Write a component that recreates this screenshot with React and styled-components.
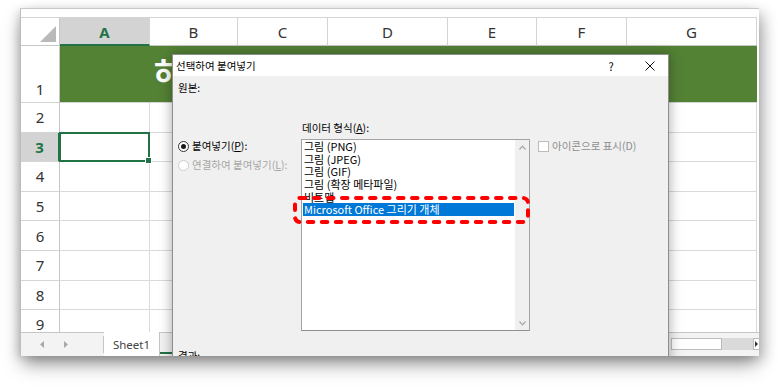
import React from 'react';
import styled, { createGlobalStyle } from 'styled-components';

const GlobalStyle = createGlobalStyle`
  html, body { margin: 0; padding: 0; background: #ffffff; }
  body { font-family: "Noto Sans", "Noto Sans CJK KR", sans-serif; }
`;

const GREEN = '#217346';

const Page = styled.div`
  width: 778px;
  height: 390px;
  box-sizing: border-box;
  padding: 8px 0 0 20px;
  overflow: hidden;
  background: #ffffff;
`;

const Window = styled.div`
  position: relative;
  width: 739px;
  height: 348px;
  box-sizing: border-box;
  border-top: 1px solid #c8c8c8;
  border-left: 1px solid #bdbdbd;
  background: #ffffff;
  overflow: hidden;
  display: flex;
  flex-direction: column;
  box-shadow: 0 10px 18px -2px rgba(0, 0, 0, 0.38), 6px 4px 12px rgba(0, 0, 0, 0.14),
    -3px 2px 8px rgba(0, 0, 0, 0.1);
`;

const TopStrip = styled.div`
  height: 8px;
  flex: none;
  background: #ffffff;
`;

const Sheet = styled.div`
  height: 315px;
  flex: none;
  overflow: hidden;
  display: grid;
  grid-template-columns: 39px 90px 88px 90px 120px 89px 90px 130px;
  grid-template-rows: 29px 57px repeat(8, 29.6px);
  font-family: "Noto Sans", "Open Sans", sans-serif;
`;

const Corner = styled.div`
  position: relative;
  box-sizing: border-box;
  border-top: 1px solid #d4d4d4;
  border-right: 1px solid #c6c6c6;
  border-bottom: 1px solid #c6c6c6;
  background: #ffffff;
  &::after {
    content: '';
    position: absolute;
    right: 3px;
    bottom: 3px;
    width: 0;
    height: 0;
    border-left: 16px solid transparent;
    border-bottom: 16px solid #b9b9b9;
  }
`;

const ColHead = styled.div`
  box-sizing: border-box;
  display: flex;
  align-items: center;
  justify-content: center;
  border-top: 1px solid #d4d4d4;
  border-right: 1px solid #d4d4d4;
  border-bottom: ${(p) => (p.$active ? `2px solid ${GREEN}` : '1px solid #c6c6c6')};
  background: ${(p) => (p.$active ? '#d3d3d3' : '#ffffff')};
  color: ${(p) => (p.$active ? GREEN : '#333333')};
  font-weight: ${(p) => (p.$active ? 700 : 400)};
  font-size: 15px;
  padding-top: 1px;
`;

const RowHead = styled.div`
  box-sizing: border-box;
  display: flex;
  justify-content: center;
  align-items: ${(p) => (p.$bottom ? 'flex-end' : 'center')};
  padding-bottom: ${(p) => (p.$bottom ? '3px' : '0')};
  border-right: ${(p) => (p.$active ? `2px solid ${GREEN}` : '1px solid #c6c6c6')};
  border-bottom: 1px solid #d4d4d4;
  background: ${(p) => (p.$active ? '#d3d3d3' : '#ffffff')};
  color: ${(p) => (p.$active ? GREEN : '#333333')};
  font-weight: ${(p) => (p.$active ? 700 : 400)};
  font-size: 15px;
`;

const Banner = styled.div`
  grid-column: span 7;
  box-sizing: border-box;
  background: #548235;
  border-bottom: 1px solid #d4d4d4;
  display: flex;
  align-items: center;
  padding: 0 0 6px 94px;
  color: #ffffff;
  font-family: "Noto Sans CJK KR", sans-serif;
  font-weight: 700;
  font-size: 31px;
  white-space: nowrap;
  overflow: hidden;
`;

const Cell = styled.div`
  position: relative;
  box-sizing: border-box;
  border-right: 1px solid #dadada;
  border-bottom: 1px solid #dadada;
  background: #ffffff;
  ${(p) =>
    p.$selected &&
    `
    z-index: 1;
    &::before {
      content: '';
      position: absolute;
      left: -1px; top: -1px; right: -1px; bottom: -1px;
      border: 2px solid ${GREEN};
    }
    &::after {
      content: '';
      position: absolute;
      right: -3px; bottom: -3px;
      width: 5px; height: 5px;
      background: ${GREEN};
      border: 1px solid #ffffff;
    }
  `}
`;

const TabBar = styled.div`
  height: 24px;
  flex: none;
  box-sizing: border-box;
  border-top: 1px solid #c6c6c6;
  background: #f3f3f3;
  display: flex;
  align-items: stretch;
  font-family: "Noto Sans", sans-serif;
`;

const NavArrows = styled.div`
  width: 83px;
  display: flex;
  align-items: center;
  padding-left: 19px;
  gap: 20px;
  box-sizing: border-box;
  border-right: 1px solid #c6c6c6;
  margin: 3px 0;
`;

const SheetTab = styled.div`
  width: 56px;
  box-sizing: border-box;
  background: #ffffff;
  border-right: 1px solid #c6c6c6;
  display: flex;
  align-items: center;
  justify-content: center;
  font-size: 11.5px;
  color: #444444;
  margin-top: -1px;
`;

const NewSheet = styled.div`
  width: 12px;
  border-bottom: 2px solid ${GREEN};
  margin-bottom: 2px;
`;

const HScroll = styled.div`
  margin-left: auto;
  display: flex;
  align-items: flex-start;
  padding-top: 5px;
`;

const Thumb = styled.div`
  width: 51px;
  height: 12px;
  box-sizing: border-box;
  background: #ffffff;
  border: 1px solid #bcbcbc;
`;

const Track = styled.div`
  width: 31px;
  height: 12px;
  background: #dadada;
`;

const ScrollEnd = styled.div`
  width: 6px;
  height: 12px;
  box-sizing: border-box;
  border: 1px solid #bcbcbc;
  border-right: none;
  background: #ffffff;
  display: flex;
  align-items: center;
  padding-left: 1px;
`;

const Dialog = styled.div`
  position: absolute;
  left: 151px;
  top: 45px;
  width: 497px;
  height: 330px;
  box-sizing: border-box;
  border: 1px solid #8e8e8e;
  background: #f0f0f0;
  box-shadow: 0 0 12px rgba(0, 0, 0, 0.35);
  display: flex;
  flex-direction: column;
  font-family: "Noto Sans CJK KR", "Noto Sans", sans-serif;
  font-size: 10.5px;
  color: #000000;
  z-index: 5;
`;

const TitleBar = styled.div`
  height: 21px;
  flex: none;
  background: #ffffff;
  display: flex;
  align-items: center;
  padding-left: 3px;
  font-size: 10.5px;
`;

const Title = styled.span`
  flex: 1;
`;

const TitleButton = styled.div`
  width: 30px;
  height: 21px;
  display: flex;
  align-items: center;
  justify-content: center;
  margin-right: ${(p) => p.$mr || 0}px;
  font-size: 11px;
`;

const Body = styled.div`
  padding: 5px 0 0 5px;
  display: flex;
  flex-direction: column;
`;

const Label = styled.div`
  line-height: 14px;
  height: 14px;
  white-space: nowrap;
  color: ${(p) => (p.$disabled ? '#a0a0a0' : '#000000')};
`;

const Main = styled.div`
  margin-top: 26px;
  display: grid;
  grid-template-columns: 123px 229px 1fr;
  grid-template-rows: 14px auto;
  row-gap: 4px;
`;

const Options = styled.div`
  grid-column: 1;
  grid-row: 2;
  display: flex;
  flex-direction: column;
  gap: 5px;
`;

const Option = styled.div`
  display: flex;
  align-items: center;
  gap: 3px;
  height: 14px;
  line-height: 14px;
  white-space: nowrap;
  color: ${(p) => (p.$disabled ? '#a6a6a6' : '#000000')};
`;

const Radio = styled.span`
  width: 11px;
  height: 11px;
  flex: none;
  box-sizing: border-box;
  border-radius: 50%;
  border: 1px solid ${(p) => (p.$disabled ? '#cccccc' : '#333333')};
  background: #ffffff;
  display: flex;
  align-items: center;
  justify-content: center;
  &::after {
    content: '';
    display: ${(p) => (p.$checked ? 'block' : 'none')};
    width: 5px;
    height: 5px;
    border-radius: 50%;
    background: #1a1a1a;
  }
`;

const Checkbox = styled.span`
  width: 11px;
  height: 11px;
  flex: none;
  box-sizing: border-box;
  border: 1px solid #bcbcbc;
  background: #ffffff;
`;

const FormatLabel = styled(Label)`
  grid-column: 2;
  grid-row: 1;
  padding-left: 1px;
`;

const ListBox = styled.div`
  grid-column: 2;
  grid-row: 2;
  height: 192px;
  box-sizing: border-box;
  border: 1px solid #a3a3a3;
  border-bottom-color: #8f8f8f;
  background: #ffffff;
  display: flex;
`;

const Items = styled.div`
  flex: 1;
  display: flex;
  flex-direction: column;
`;

const Item = styled.div`
  height: 12.7px;
  line-height: 12.7px;
  margin: 0 1px;
  padding-left: 1px;
  white-space: nowrap;
  font-size: 11px;
  background: ${(p) => (p.$selected ? '#0078d7' : 'transparent')};
  color: ${(p) => (p.$selected ? '#ffffff' : '#000000')};
`;

const ScrollBar = styled.div`
  width: 14px;
  background: #f0f0f0;
  display: flex;
  flex-direction: column;
  justify-content: space-between;
  align-items: center;
  padding: 5px 0 4px;
`;

const SideOption = styled(Option)`
  grid-column: 3;
  grid-row: 2;
  align-self: start;
  padding-left: 8px;
  color: #8e8e8e;
`;

const ResultLabel = styled(Label)`
  margin-top: 18px;
`;

const Annotation = styled.svg`
  position: absolute;
  left: 120px;
  top: 141px;
  overflow: visible;
`;

const Chevron = ({ up }) => (
  <svg width="7" height="5" viewBox="0 0 7 5">
    <path
      d={up ? 'M0.5 4.5 L3.5 1.2 L6.5 4.5' : 'M0.5 0.5 L3.5 3.8 L6.5 0.5'}
      fill="none"
      stroke="#a6a6a6"
      strokeWidth="1.2"
    />
  </svg>
);

const TriArrow = ({ left }) => (
  <svg width="4" height="7" viewBox="0 0 4 7">
    <path d={left ? 'M4 0 L0 3.5 L4 7 Z' : 'M0 0 L4 3.5 L0 7 Z'} fill="#a8a8a8" />
  </svg>
);

const cols = ['A', 'B', 'C', 'D', 'E', 'F', 'G'];
const items = [
  '그림 (PNG)',
  '그림 (JPEG)',
  '그림 (GIF)',
  '그림 (확장 메타파일)',
  '비트맵',
  'Microsoft Office 그리기 개체',
];

export default function App() {
  const rows = [2, 3, 4, 5, 6, 7, 8, 9];
  return (
    <>
      <GlobalStyle />
      <Page>
        <Window>
          <TopStrip />
          <Sheet>
            <Corner />
            {cols.map((c) => (
              <ColHead key={c} $active={c === 'A'}>
                {c}
              </ColHead>
            ))}
            <RowHead $bottom>1</RowHead>
            <Banner>하반기 실적</Banner>
            {rows.map((r) => (
              <React.Fragment key={r}>
                <RowHead $active={r === 3}>{r}</RowHead>
                {cols.map((c) => (
                  <Cell key={c} $selected={r === 3 && c === 'A'} />
                ))}
              </React.Fragment>
            ))}
          </Sheet>
          <TabBar>
            <NavArrows>
              <TriArrow left />
              <TriArrow />
            </NavArrows>
            <SheetTab>Sheet1</SheetTab>
            <NewSheet />
            <HScroll>
              <Thumb />
              <Track />
              <ScrollEnd>
                <svg width="3" height="6" viewBox="0 0 3 6">
                  <path d="M0 0 L3 3 L0 6 Z" fill="#333" />
                </svg>
              </ScrollEnd>
            </HScroll>
          </TabBar>

          <Dialog>
            <TitleBar>
              <Title>선택하여 붙여넣기</Title>
              <TitleButton $mr={9}>?</TitleButton>
              <TitleButton $mr={3}>
                <svg width="10" height="10" viewBox="0 0 10 10">
                  <path d="M0.5 0.5 L9.5 9.5 M9.5 0.5 L0.5 9.5" stroke="#111" strokeWidth="1" />
                </svg>
              </TitleButton>
            </TitleBar>
            <Body>
              <Label>원본:</Label>
              <Main>
                <FormatLabel>
                  데이터 형식(<u>A</u>):
                </FormatLabel>
                <Options>
                  <Option>
                    <Radio $checked />
                    <span>
                      붙여넣기(<u>P</u>):
                    </span>
                  </Option>
                  <Option $disabled>
                    <Radio $disabled />
                    <span>
                      연결하여 붙여넣기(<u>L</u>):
                    </span>
                  </Option>
                </Options>
                <ListBox>
                  <Items>
                    {items.map((it, i) => (
                      <Item key={it} $selected={i === items.length - 1}>
                        {it}
                      </Item>
                    ))}
                  </Items>
                  <ScrollBar>
                    <Chevron up />
                    <Chevron />
                  </ScrollBar>
                </ListBox>
                <SideOption>
                  <Checkbox />
                  <span>아이콘으로 표시(D)</span>
                </SideOption>
              </Main>
              <ResultLabel>결과:</ResultLabel>
            </Body>
            <Annotation width="237" height="28" viewBox="0 0 237 28">
              <rect
                x="2"
                y="2"
                width="233"
                height="24"
                rx="5"
                fill="none"
                stroke="#ff0000"
                strokeWidth="4"
                strokeDasharray="5.5 8.5"
                strokeLinecap="round"
              />
            </Annotation>
          </Dialog>
        </Window>
      </Page>
    </>
  );
}
